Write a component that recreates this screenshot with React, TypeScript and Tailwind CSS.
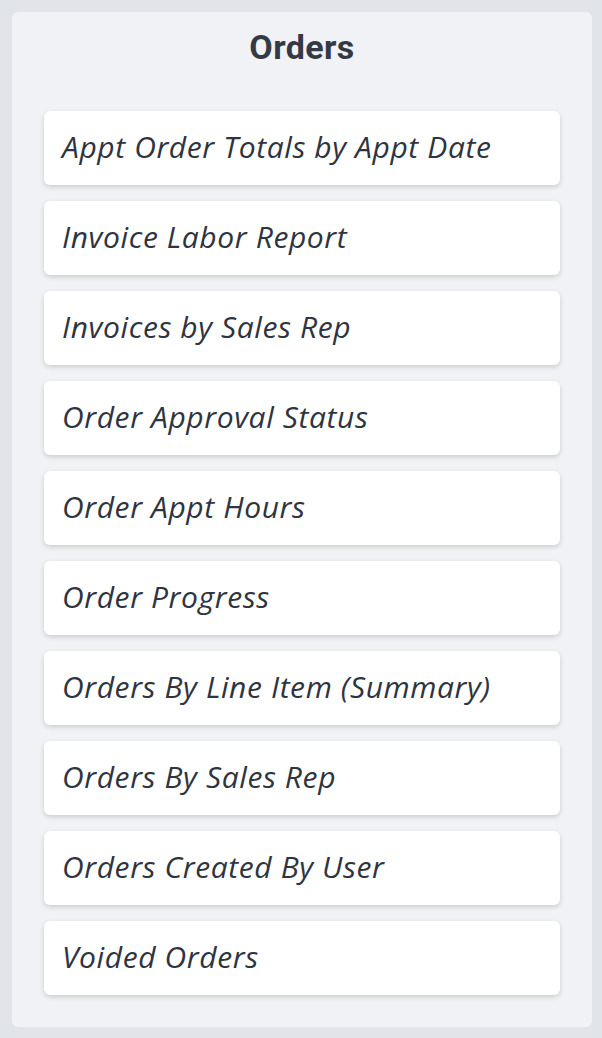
import * as React from 'react';

const reports = [
  "Appt Order Totals by Appt Date",
  "Invoice Labor Report",
  "Invoices by Sales Rep",
  "Order Approval Status",
  "Order Appt Hours",
  "Order Progress",
  "Orders By Line Item (Summary)",
  "Orders By Sales Rep",
  "Orders Created By User",
  "Voided Orders",
];

export default function App() {
  return (
    <div className="min-h-[1038px] w-[602px] bg-[#e1e4e8] pl-3 pt-3">
      <section className="w-[580px] rounded-md bg-[#f0f2f5] px-8 pb-8 pt-[15px]">
        <h2 className="mb-[44px] text-center font-['Roboto',sans-serif] text-[34px] font-bold leading-[40px] tracking-[0.4px] text-[#343a45]">
          Orders
        </h2>
        <div className="flex flex-col gap-4">
          {reports.map((name) => (
            <div
              key={name}
              className="flex h-[74px] items-center rounded-md bg-white px-[18px] pb-1 shadow-[0_2px_5px_rgba(0,0,0,0.16)]"
            >
              <span className="font-['Open_Sans',sans-serif] text-[30px] italic tracking-[0.6px] text-[#2e3440]">
                {name}
              </span>
            </div>
          ))}
        </div>
      </section>
    </div>
  );
}
